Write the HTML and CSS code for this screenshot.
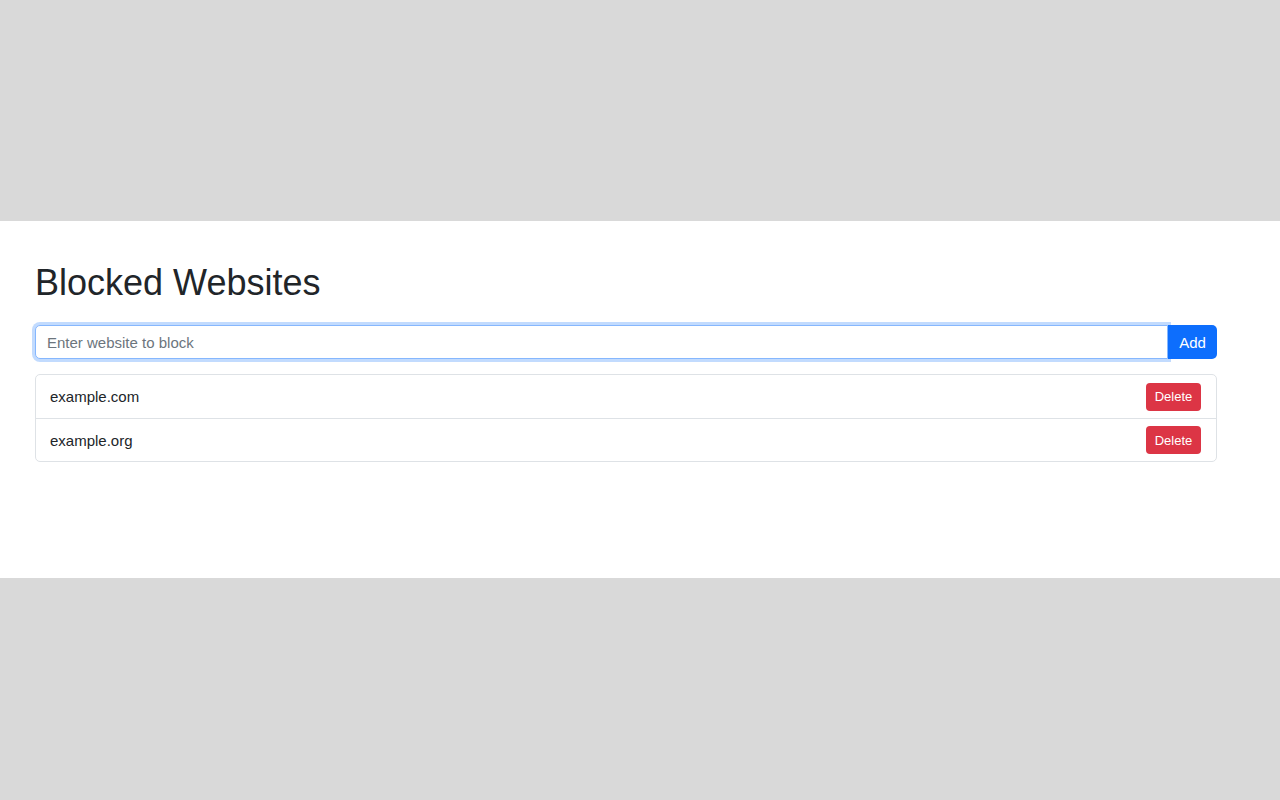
FILE: index.html
```html
<!DOCTYPE html>
<html lang="en">
<head>
<meta charset="utf-8">
<title>Blocked Websites</title>
<link rel="stylesheet" href="styles.css">
</head>
<body>
<main class="panel">
  <h1 class="title">Blocked Websites</h1>
  <form class="add-row">
    <input class="site-input" type="text" placeholder="Enter website to block">
    <button class="btn-add" type="button">Add</button>
  </form>
  <ul class="site-list">
    <li class="site-item"><span class="site-name">example.com</span><button class="btn-delete" type="button">Delete</button></li>
    <li class="site-item"><span class="site-name">example.org</span><button class="btn-delete" type="button">Delete</button></li>
  </ul>
</main>
</body>
</html>
```

FILE: styles.css
```css
* { box-sizing: border-box; }
html, body { margin: 0; padding: 0; }
body {
  background: #d9d9d9;
  min-height: 100vh;
  padding-top: 221px;
  font-family: "Liberation Sans", Arial, sans-serif;
  color: #212529;
}
.panel {
  width: 100%;
  height: 357px;
  background: #ffffff;
  padding: 40px 63px 0 35px;
}
.title {
  margin: 0 0 21px 0;
  font-size: 36px;
  line-height: 43px;
  font-weight: 400;
  color: #212529;
}
.add-row {
  display: flex;
  margin: 0 0 15px 0;
}
.site-input {
  flex: 1;
  height: 34px;
  padding: 0 11px;
  font-family: "Liberation Sans", Arial, sans-serif;
  font-size: 15px;
  color: #212529;
  border: 1px solid #86b7fe;
  border-radius: 5px 0 0 5px;
  box-shadow: 0 0 0 3px rgba(13, 110, 253, 0.25);
  outline: none;
  background: #fff;
}
.site-input::placeholder { color: #6c757d; }
.btn-add {
  position: relative;
  width: 49px;
  height: 34px;
  border: none;
  background: #0d6efd;
  color: #fff;
  font-family: "Liberation Sans", Arial, sans-serif;
  font-size: 15px;
  border-radius: 0 5px 5px 0;
  padding: 0;
}
.site-list {
  list-style: none;
  margin: 0;
  padding: 0;
  border: 1px solid #dee2e6;
  border-radius: 5px;
}
.site-item {
  display: flex;
  align-items: center;
  justify-content: space-between;
  height: 43px;
  padding: 0 15px 0 14px;
  font-size: 15px;
}
.site-item + .site-item { border-top: 1px solid #dee2e6; }
.btn-delete {
  width: 55px;
  height: 28px;
  border: none;
  border-radius: 4px;
  background: #dc3545;
  color: #fff;
  font-family: "Liberation Sans", Arial, sans-serif;
  font-size: 13px;
  padding: 0;
}
```
